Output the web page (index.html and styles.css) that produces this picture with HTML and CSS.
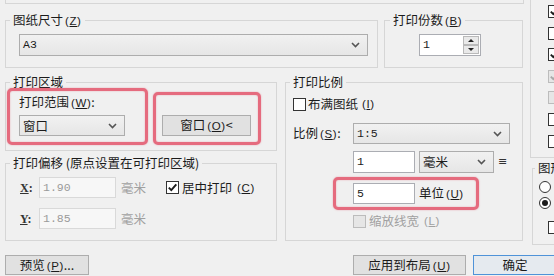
FILE: index.html
```html
<!DOCTYPE html>
<html>
<head>
  <meta charset="utf-8">
  <title>打印 - 模型</title>
  <link rel="stylesheet" href="styles.css">
</head>
<body>
  <div class="dialog">
    <div class="upper">
      <div class="main">
        <div class="stub"></div>

        <div class="row-top">
          <fieldset class="group paper">
            <legend>图纸尺寸<span class="key">(<u>Z</u>)</span></legend>
            <div class="combo">
              <span class="value">A3</span>
              <svg class="chev" width="9" height="6" viewBox="0 0 9 6"><polyline points="1,1 4.5,4.5 8,1"/></svg>
            </div>
          </fieldset>

          <fieldset class="group copies">
            <legend>打印份数<span class="key">(<u>B</u>)</span></legend>
            <div class="spin">
              <span class="value">1</span>
              <span class="spin-btns">
                <span class="spin-up"></span>
                <span class="spin-down"></span>
              </span>
            </div>
          </fieldset>
        </div>

        <div class="row-mid">
          <div class="col-left">
            <fieldset class="group area">
              <legend>打印区域</legend>
              <div class="area-grid">
                <span class="range-label">打印范围<span class="key">(<u>W</u>)</span>:</span>
                <div class="combo range">
                  <span>窗口</span>
                  <svg class="chev" width="9" height="6" viewBox="0 0 9 6"><polyline points="1,1 4.5,4.5 8,1"/></svg>
                </div>
                <button class="btn window">窗口<span class="key">(<u>O</u>)</span>&lt;</button>
              </div>
            </fieldset>

            <fieldset class="group offset">
              <legend>打印偏移 (原点设置在可打印区域)</legend>
              <div class="offset-row">
                <span class="axis"><u>X</u>:</span>
                <span class="field disabled"><span class="value">1.90</span></span>
                <span class="unit">毫米</span>
                <span class="check center">
                  <span class="cb on"><svg width="11" height="11" viewBox="0 0 11 11"><polyline points="1.8,5.6 4.3,8.2 9.3,2.4"/></svg></span>
                  居中打印<span class="key">(<u>C</u>)</span>
                </span>
              </div>
              <div class="offset-row">
                <span class="axis"><u>Y</u>:</span>
                <span class="field disabled"><span class="value">1.85</span></span>
                <span class="unit">毫米</span>
              </div>
            </fieldset>
          </div>

          <fieldset class="group scale">
            <legend>打印比例</legend>
            <div class="check fit">
              <span class="cb"></span>布满图纸<span class="key">(<u>I</u>)</span>
            </div>
            <div class="scale-row">
              <span class="scale-label">比例<span class="key">(<u>S</u>)</span>:</span>
              <div class="combo ratio">
                <span class="value">1:5</span>
                <svg class="chev" width="9" height="6" viewBox="0 0 9 6"><polyline points="1,1 4.5,4.5 8,1"/></svg>
              </div>
            </div>
            <div class="unit-row">
              <span class="field mm-value"><span class="value">1</span></span>
              <div class="combo mm">
                <span>毫米</span>
                <svg class="chev" width="9" height="6" viewBox="0 0 9 6"><polyline points="1,1 4.5,4.5 8,1"/></svg>
              </div>
              <span class="equals">≡</span>
            </div>
            <div class="units-row">
              <span class="field mm-value"><span class="value">5</span></span>
              <span class="units-label">单位<span class="key">(<u>U</u>)</span></span>
            </div>
            <div class="check lineweight disabled">
              <span class="cb dis"></span>缩放线宽<span class="key">(<u>L</u>)</span>
            </div>
          </fieldset>
        </div>
      </div>

      <div class="side">
        <div class="options">
          <span class="cb on"><svg width="11" height="11" viewBox="0 0 11 11"><polyline points="1.8,5.6 4.3,8.2 9.3,2.4"/></svg></span>
          <span class="cb"></span>
          <span class="cb on"><svg width="11" height="11" viewBox="0 0 11 11"><polyline points="1.8,5.6 4.3,8.2 9.3,2.4"/></svg></span>
          <span class="cb dis on"><svg width="11" height="11" viewBox="0 0 11 11"><polyline points="1.8,5.6 4.3,8.2 9.3,2.4"/></svg></span>
          <span class="cb dis"></span>
          <span class="cb"></span>
          <span class="cb"></span>
        </div>

        <fieldset class="group orient">
          <legend>图形方向</legend>
          <span class="radio"></span>
          <span class="radio on"></span>
          <span class="cb flip"></span>
        </fieldset>
      </div>
    </div>

    <div class="buttons">
      <button class="btn preview">预览<span class="key">(<u>P</u>)</span>...</button>
      <button class="btn apply">应用到布局<span class="key">(<u>U</u>)</span></button>
      <button class="btn ok">确定</button>
    </div>

    <!-- hand-drawn red highlights on top of the screenshot -->
    <div class="mark mark-range"></div>
    <div class="mark mark-window"></div>
    <div class="mark mark-units"></div>
  </div>
</body>
</html>
```

FILE: styles.css
```css
* {
  box-sizing: border-box;
}

body {
  margin: 0;
  width: 554px;
  height: 276px;
  overflow: hidden;
  background: #f0f0f0;
  color: #1b1b1b;
  font-family: "Noto Sans CJK SC", "Noto Sans", sans-serif;
  font-size: 12.5px;
  line-height: 16px;
}

.dialog {
  position: relative;
  padding-left: 5px;
}

.upper {
  display: flex;
  align-items: flex-start;
}

.main {
  width: 519px;
  flex-shrink: 0;
}

.side {
  width: 80px;
  flex-shrink: 0;
  margin-left: 6px;
}

/* bottom edge of the printer group that is scrolled off the top */
.stub {
  height: 4px;
  border: 1px solid #d6d6d6;
  border-top: none;
}

/* group boxes */
.group {
  margin: 0;
  min-width: 0;
  border: 1px solid #d6d6d6;
}

.group legend {
  padding: 0 3px;
  line-height: 16px;
}

.key {
  font-family: "Liberation Sans", sans-serif;
  font-size: 11.5px;
  letter-spacing: 0.6px;
  margin-left: 2px;
}

.value {
  font-family: "Liberation Mono", monospace;
  font-size: 11.5px;
}

/* controls */
.combo {
  display: flex;
  align-items: center;
  justify-content: space-between;
  height: 22px;
  padding: 0 7px 0 3px;
  border: 1px solid #adadad;
  background: linear-gradient(#f1f1f1, #e6e6e6);
}

.chev polyline {
  fill: none;
  stroke: #555;
  stroke-width: 1.6;
}

.field {
  display: flex;
  align-items: center;
  height: 21px;
  padding-left: 3px;
  border: 1px solid #abadb3;
  background: #fff;
}

.field.disabled {
  border-color: #d9d9d9;
  background: #f7f7f7;
  color: #9a9a9a;
}

.btn {
  height: 21px;
  padding: 0;
  border: 1px solid #adadad;
  background: #e1e1e1;
  color: #1b1b1b;
  font: inherit;
  line-height: 16px;
}

.check {
  display: flex;
  align-items: center;
  gap: 3px;
  white-space: nowrap;
}

.cb {
  display: inline-flex;
  align-items: center;
  justify-content: center;
  width: 13px;
  height: 13px;
  flex-shrink: 0;
  border: 1px solid #333;
  background: #fff;
}

.cb svg polyline {
  fill: none;
  stroke: #1b1b1b;
  stroke-width: 1.9;
}

.cb.dis {
  border-color: #bcbcbc;
  background: #e6e6e6;
}

.cb.dis svg polyline {
  stroke: #a8a8a8;
}

.radio {
  display: flex;
  align-items: center;
  justify-content: center;
  width: 12px;
  height: 12px;
  border: 1px solid #333;
  border-radius: 50%;
  background: #fff;
}

.radio.on::after {
  content: "";
  width: 6px;
  height: 6px;
  border-radius: 50%;
  background: #1b1b1b;
}

/* top row */
.row-top {
  display: flex;
  gap: 6px;
  margin-top: 8px;
}

.paper {
  width: 373px;
  padding: 5px 9px 11px 13px;
}

.paper legend {
  margin-left: -9px;
}

.copies {
  width: 139px;
  padding: 5px 0 11px 34px;
}

.copies legend {
  margin-left: -29px;
}

.spin {
  display: flex;
  width: 62px;
  height: 22px;
  border: 1px solid #abadb3;
  background: #fff;
}

.spin .value {
  flex: 1;
  padding: 2px 0 0 3px;
}

.spin-btns {
  display: flex;
  flex-direction: column;
  width: 16px;
  margin: 1px;
}

.spin-up,
.spin-down {
  flex: 1;
  display: flex;
  align-items: center;
  justify-content: center;
  border: 1px solid #b9b9b9;
  background: #e9e9e9;
}

.spin-up::after {
  content: "";
  border: 3px solid transparent;
  border-bottom: 3px solid #222;
  border-top: none;
}

.spin-down::after {
  content: "";
  border: 3px solid transparent;
  border-top: 3px solid #222;
  border-bottom: none;
}

/* middle row */
.row-mid {
  display: flex;
  gap: 8px;
  margin-top: 6px;
}

.col-left {
  width: 272px;
}

.area {
  padding: 4px 0 14px 13px;
}

.area legend {
  margin-left: -9px;
}

.area-grid {
  display: grid;
  grid-template-columns: 106px 89px;
  column-gap: 37px;
  row-gap: 4px;
}

.range-label {
  grid-column: 1;
}

.combo.range {
  grid-column: 1;
  grid-row: 2;
  height: 21px;
}

.btn.window {
  grid-column: 2;
  grid-row: 2;
}

.offset {
  margin-top: 4px;
  padding: 6px 0 11px 14px;
}

.offset legend {
  margin-left: -10px;
}

.offset-row {
  display: flex;
  align-items: center;
  height: 21px;
}

.offset-row + .offset-row {
  margin-top: 10px;
}

.axis {
  width: 19px;
  font-family: "Liberation Serif", serif;
  font-size: 12px;
  font-weight: bold;
  color: #333;
}

.offset .field {
  width: 77px;
}

.unit {
  margin-left: 5px;
  color: #a0a0a0;
}

.check.center {
  margin-left: 20px;
}

.scale {
  width: 238px;
  padding: 6px 0 11px 7px;
}

.scale legend {
  margin-left: -3px;
}

.check.fit {
  height: 16px;
  gap: 2px;
}

.scale-row {
  display: flex;
  align-items: center;
  margin-top: 11px;
}

.scale-label {
  width: 60px;
}

.combo.ratio {
  width: 157px;
  height: 21px;
}

.unit-row {
  display: flex;
  align-items: center;
  margin: 7px 0 0 60px;
}

.mm-value {
  width: 62px;
}

.unit-row .mm-value {
  height: 22px;
}

.combo.mm {
  width: 75px;
  margin-left: 4px;
}

.equals {
  margin-left: 4px;
  font-family: "DejaVu Sans", sans-serif;
  font-size: 11px;
  color: #333;
}

.units-row {
  display: flex;
  align-items: center;
  gap: 4px;
  margin: 10px 0 0 60px;
}

.check.lineweight {
  height: 16px;
  margin: 9px 0 0 60px;
  color: #a0a0a0;
}

/* right hand column, mostly cut off */
.options {
  display: flex;
  flex-direction: column;
  gap: 8.6px;
  height: 158px;
  padding: 5px 0 0 17px;
  border-left: 1px solid #d6d6d6;
  border-bottom: 1px solid #d6d6d6;
}

.orient {
  width: 60px;
  margin: 2px 0 0 2px;
  padding: 5px 0 7px 6px;
}

.orient legend {
  margin-left: -4px;
  white-space: nowrap;
}

.orient .radio + .radio {
  margin-top: 4px;
}

.cb.flip {
  margin: 12px 0 0 9px;
}

/* bottom buttons */
.buttons {
  display: flex;
  margin-top: 10px;
}

.buttons .btn {
  height: 20px;
  flex-shrink: 0;
}

.btn.preview {
  width: 84px;
}

.btn.apply {
  width: 113px;
  margin-left: 264px;
}

.btn.ok {
  width: 84px;
  margin-left: 7px;
  border-color: #4f93d8;
  background: #e5eaef;
}

/* red marker annotations */
.mark {
  position: absolute;
  border: 3px solid rgba(224, 56, 82, 0.72);
  border-radius: 5px;
  box-shadow: 0 0 1.5px rgba(224, 56, 82, 0.5), inset 0 0 1.5px rgba(224, 56, 82, 0.5);
}

.mark-range {
  left: 7px;
  top: 88px;
  width: 141px;
  height: 57px;
}

.mark-window {
  left: 153px;
  top: 92px;
  width: 108px;
  height: 53px;
}

.mark-units {
  left: 333px;
  top: 177px;
  width: 146px;
  height: 33px;
}
```
